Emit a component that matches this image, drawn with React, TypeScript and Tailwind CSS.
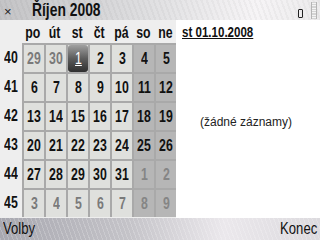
const font = "font-['Liberation_Sans',Arial,sans-serif]";

type Day = { n: number; muted?: boolean; today?: boolean };

const weeks: { wk: number; days: Day[] }[] = [
  { wk: 40, days: [{ n: 29, muted: true }, { n: 30, muted: true }, { n: 1, today: true }, { n: 2 }, { n: 3 }, { n: 4 }, { n: 5 }] },
  { wk: 41, days: [6, 7, 8, 9, 10, 11, 12].map((n) => ({ n })) },
  { wk: 42, days: [13, 14, 15, 16, 17, 18, 19].map((n) => ({ n })) },
  { wk: 43, days: [20, 21, 22, 23, 24, 25, 26].map((n) => ({ n })) },
  { wk: 44, days: [{ n: 27 }, { n: 28 }, { n: 29 }, { n: 30 }, { n: 31 }, { n: 1, muted: true }, { n: 2, muted: true }] },
  { wk: 45, days: [3, 4, 5, 6, 7, 8, 9].map((n) => ({ n, muted: true })) },
];

const dayNames = ['po', 'út', 'st', 'čt', 'pá', 'so', 'ne'];

// Nokia Sans is narrow and tall; squeeze Liberation Sans horizontally
function Narrow({ children, className = '' }: { children: React.ReactNode; className?: string }) {
  return <span className={`inline-block scale-x-[0.77] whitespace-nowrap ${className}`}>{children}</span>;
}

function Cell({ d, weekend }: { d: Day; weekend: boolean }) {
  const bg = weekend ? 'bg-[#b6b6b6]' : 'bg-[#dfe0dd]';
  const color = d.muted ? (weekend ? 'text-[#858585]' : 'text-[#7a7a7a]') : 'text-[#111]';
  return (
    <div className={`flex h-[29px] w-[22px] items-center justify-center border-l-2 border-t-2 border-[#a9a9a9] ${bg}`}>
      {d.today ? (
        <div className="flex h-[27px] w-[20px] items-center justify-center rounded-[3px] bg-gradient-to-b from-[#a0a0a0] via-[#5c5c5c] to-[#303030]">
          <Narrow className="text-[16px] text-white underline">{d.n}</Narrow>
        </div>
      ) : (
        <Narrow className={`text-[16px] font-bold ${color}`}>{d.n}</Narrow>
      )}
    </div>
  );
}

export default function App() {
  return (
    <div className={`flex h-[240px] w-[320px] flex-col overflow-hidden bg-white ${font}`}>
      {/* Title bar */}
      <header className="relative flex h-[20px] items-end bg-[repeating-linear-gradient(70deg,#00000008_0px,#00000008_2px,transparent_2px,transparent_5px),linear-gradient(90deg,#c4c4c6,#dedee0_45%,#f6f4f6_80%,#ecebec)]">
        <span className="ml-[4px] mb-[2px] text-[13px] leading-none text-[#222]">×</span>
        <Narrow className="ml-[20px] origin-left text-[18px] font-bold leading-[19px] text-[#111]">Říjen 2008</Narrow>
        <div className="absolute right-[17px] top-[9px] h-[9px] w-[5px] rounded-[1px] border border-[#222]" />
        <div className="absolute right-[3px] top-[2px] flex h-[17px] w-[6px] flex-col justify-between border-x border-[#b5b5b5] bg-[#d4d4d4] py-px">
          {[0, 1, 2, 3, 4, 5, 6].map((i) => (
            <div key={i} className="h-px w-full bg-[#f4f4f4]" />
          ))}
        </div>
      </header>

      <div className="flex flex-1">
        {/* Calendar */}
        <div className="flex w-[176px] flex-col bg-[#eeeeee]">
          <div className="flex h-[23px] items-center pl-[22px] pt-[2px]">
            {dayNames.map((n) => (
              <div key={n} className="w-[22px] text-center">
                <Narrow className="text-[16px] font-bold text-[#111]">{n}</Narrow>
              </div>
            ))}
          </div>
          {weeks.map((w) => (
            <div key={w.wk} className="flex">
              <div className="flex h-[29px] w-[22px] items-center justify-center">
                <Narrow className="text-[16px] font-bold text-[#111]">{w.wk}</Narrow>
              </div>
              {w.days.map((d, i) => (
                <Cell key={i} d={d} weekend={i >= 5} />
              ))}
            </div>
          ))}
        </div>

        {/* Day view */}
        <div className="flex flex-1 flex-col">
          <div className="flex h-[23px] items-center pl-[6px] pt-[2px]">
            <Narrow className="origin-left text-[15px] font-bold text-[#111] underline">st 01.10.2008</Narrow>
          </div>
          <div className="flex flex-1 items-center pb-[18px] pl-[24px]">
            <span className="text-[12px] text-[#222]">(žádné záznamy)</span>
          </div>
        </div>
      </div>

      {/* Softkeys */}
      <footer className="flex h-[22px] items-center justify-between bg-[repeating-linear-gradient(70deg,#ffffff30_0px,#ffffff30_1px,transparent_1px,transparent_4px),linear-gradient(90deg,#a8a8b0,#c4c3c8_40%,#ebe8ec_70%,#dcdade)] px-[3px]">
        <Narrow className="origin-left text-[17px] text-[#111]">Volby</Narrow>
        <Narrow className="origin-right text-[17px] text-[#111]">Konec</Narrow>
      </footer>
    </div>
  );
}
